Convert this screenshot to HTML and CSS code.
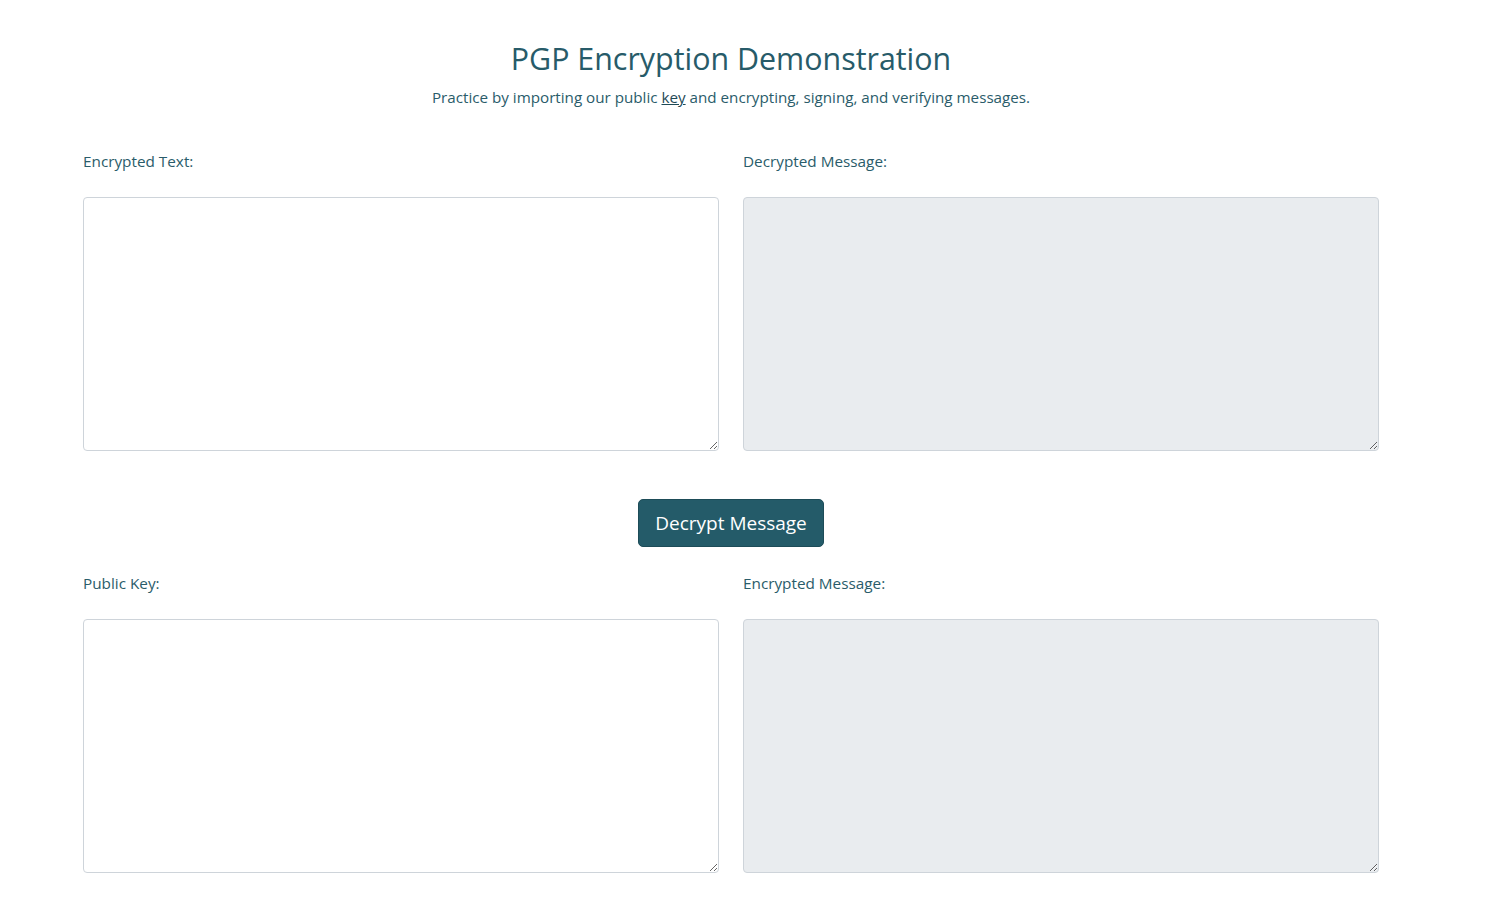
FILE: index.html
```html
<!DOCTYPE html>
<html lang="en">
<head>
<meta charset="utf-8">
<title>PGP Encryption Demonstration</title>
<link rel="stylesheet" href="styles.css">
</head>
<body>
<main class="page">
  <header class="intro">
    <h1 class="title">PGP Encryption Demonstration</h1>
    <p class="lead">Practice by importing our public <a class="link" href="#">key</a> and encrypting, signing, and verifying messages.</p>
  </header>
  <section class="grid">
    <div class="field">
      <label class="label" for="enc">Encrypted Text:</label>
      <textarea id="enc" class="box"></textarea>
    </div>
    <div class="field">
      <label class="label" for="dec">Decrypted Message:</label>
      <textarea id="dec" class="box box-ro" readonly></textarea>
    </div>
  </section>
  <div class="actions">
    <button class="btn" type="button">Decrypt Message</button>
  </div>
  <section class="grid">
    <div class="field">
      <label class="label" for="pub">Public Key:</label>
      <textarea id="pub" class="box"></textarea>
    </div>
    <div class="field">
      <label class="label" for="encm">Encrypted Message:</label>
      <textarea id="encm" class="box box-ro" readonly></textarea>
    </div>
  </section>
</main>
</body>
</html>
```
FILE: styles.css
```css
html, body {
  margin: 0;
  padding: 0;
  background: #ffffff;
}
body {
  font-family: "Open Sans", "Noto Sans", sans-serif;
  color: #2a5c6a;
}
.page {
  width: 1296px;
  padding: 40px 0 40px 83px;
}
.intro {
  text-align: center;
}
.title {
  margin: 0;
  font-size: 30.4px;
  font-weight: 400;
  line-height: 38px;
  color: #275b69;
}
.lead {
  margin: 7px 0 0;
  font-size: 15.2px;
  line-height: 24px;
}
.link {
  color: #1f4a56;
  text-decoration: underline;
}
.grid {
  display: grid;
  grid-template-columns: 1fr 1fr;
  column-gap: 24px;
  margin-top: 40px;
}
.field {
  display: flex;
  flex-direction: column;
}
.label {
  font-size: 15.3px;
  line-height: 24px;
  margin-bottom: 24px;
}
.box {
  box-sizing: border-box;
  height: 254px;
  width: 100%;
  border: 1px solid #ced4da;
  border-radius: 4px;
  background: #ffffff;
  font: inherit;
  padding: 6px 12px;
  resize: vertical;
  outline: none;
}
.box-ro {
  background: #e9ecef;
}
.actions {
  display: flex;
  justify-content: center;
  margin-top: 48px;
}
.actions + .grid {
  margin-top: 24px;
}
.btn {
  box-sizing: border-box;
  height: 48px;
  width: 186px;
  background: #245b69;
  border: 1px solid #1d4c58;
  border-radius: 5px;
  color: #ffffff;
  font-family: inherit;
  font-size: 19px;
  padding: 0 16px;
}
```
